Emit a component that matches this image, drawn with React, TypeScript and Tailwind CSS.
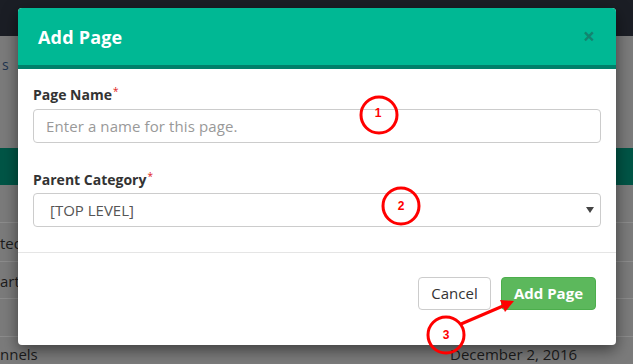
import React from "react";

export default function App() {
  const font = { fontFamily: '"Open Sans", "Liberation Sans", sans-serif' };
  return (
    <div
      className="relative w-[633px] h-[364px] overflow-hidden bg-[#7b7b7b]"
      style={font}
    >
      {/* page behind the overlay */}
      <div className="flex flex-col">
        <div className="h-[36px] bg-[#1b1e25]" />
        <div className="h-[112px] pt-[19px] pl-[2px] text-[14px] leading-[20px] text-[#1e3450]">
          s
        </div>
        <div className="h-[37px] bg-[#005546]" />
        <div className="h-[38px] border-b border-[#8c8c8c]" />
        <div className="h-[39px] border-b border-[#8c8c8c] flex items-center pt-[2px] text-[15px] text-[#1c1c1c]">
          ted
        </div>
        <div className="h-[37px] border-b border-[#8c8c8c] flex items-center pt-[2px] text-[15px] text-[#1c1c1c]">
          arted
        </div>
        <div className="h-[38px] border-b border-[#8c8c8c]" />
        <div className="h-[27px] flex items-end text-[15px] leading-[20px] text-[#1c1c1c]">
          <span className="w-[450px]">nnels</span>
          <span>December 2, 2016</span>
        </div>
      </div>

      {/* modal */}
      <div className="absolute left-[18px] top-[8px] w-[598px] h-[337px] flex flex-col rounded-[4px] bg-white overflow-hidden shadow-[0_5px_15px_rgba(0,0,0,0.5)]">
        <div className="h-[61px] shrink-0 flex items-center justify-between bg-[#00b894] border-b-4 border-[#00806a] pl-[20px] pr-[21px]">
          <span className="text-[18px] font-bold text-white leading-none pt-[1px] tracking-[0.2px]">
            Add Page
          </span>
          <span className="text-[21px] font-bold text-[#12856f] leading-none">
            ×
          </span>
        </div>
        <div className="flex flex-col px-[15px] pt-[16px] pb-[25px] border-b border-[#e5e5e5]">
          <div className="h-[20px] text-[14px] font-bold text-[#333] leading-[20px]">
            Page Name<sup className="text-[#e02020] font-normal text-[10px] ml-[1px]">*</sup>
          </div>
          <div className="mt-[4px] h-[34px] rounded-[4px] border border-[#ccc] flex items-center pl-[12px] text-[15px] tracking-[0.1px] text-[#999]">
            Enter a name for this page.
          </div>
          <div className="mt-[27px] h-[20px] text-[14px] font-bold text-[#333] leading-[20px]">
            Parent Category<sup className="text-[#e02020] font-normal text-[10px] ml-[1px]">*</sup>
          </div>
          <div className="mt-[3px] h-[34px] rounded-[4px] border border-[#ccc] flex items-center justify-between pl-[16px] pr-[6px] text-[15px] text-[#555]">
            <span>[TOP LEVEL]</span>
            <svg width="8" height="6" viewBox="0 0 8 6">
              <path d="M0 0 L8 0 L4 6 Z" fill="#444" />
            </svg>
          </div>
        </div>
        <div className="flex justify-end gap-[10px] pt-[24px] pr-[20px]">
          <div className="w-[73px] h-[33px] rounded-[4px] border border-[#ccc] bg-white flex items-center justify-center text-[15px] text-[#333]">
            Cancel
          </div>
          <div className="w-[95px] h-[33px] rounded-[4px] border border-[#4cae4c] bg-[#5cb85c] flex items-center justify-center text-[15px] font-bold text-white">
            Add Page
          </div>
        </div>
      </div>

      {/* annotations */}
      <svg
        className="absolute left-0 top-0 pointer-events-none"
        width="633"
        height="364"
        viewBox="0 0 633 364"
      >
        <g fill="none" stroke="#ff0000" strokeWidth="3">
          <circle cx="379" cy="115" r="18" />
          <circle cx="401" cy="206" r="18" />
          <circle cx="446" cy="335" r="18" />
          <line x1="461" y1="324" x2="503" y2="306" />
        </g>
        <path d="M514 301 L500 300 L505 312 Z" fill="#ff0000" />
        <g
          fill="#ff0000"
          fontFamily='"Liberation Sans", Arial, sans-serif'
          fontWeight="bold"
          fontSize="12"
          textAnchor="middle"
        >
          <text x="378" y="117">1</text>
          <text x="401" y="210">2</text>
          <text x="446" y="339">3</text>
        </g>
      </svg>
    </div>
  );
}
